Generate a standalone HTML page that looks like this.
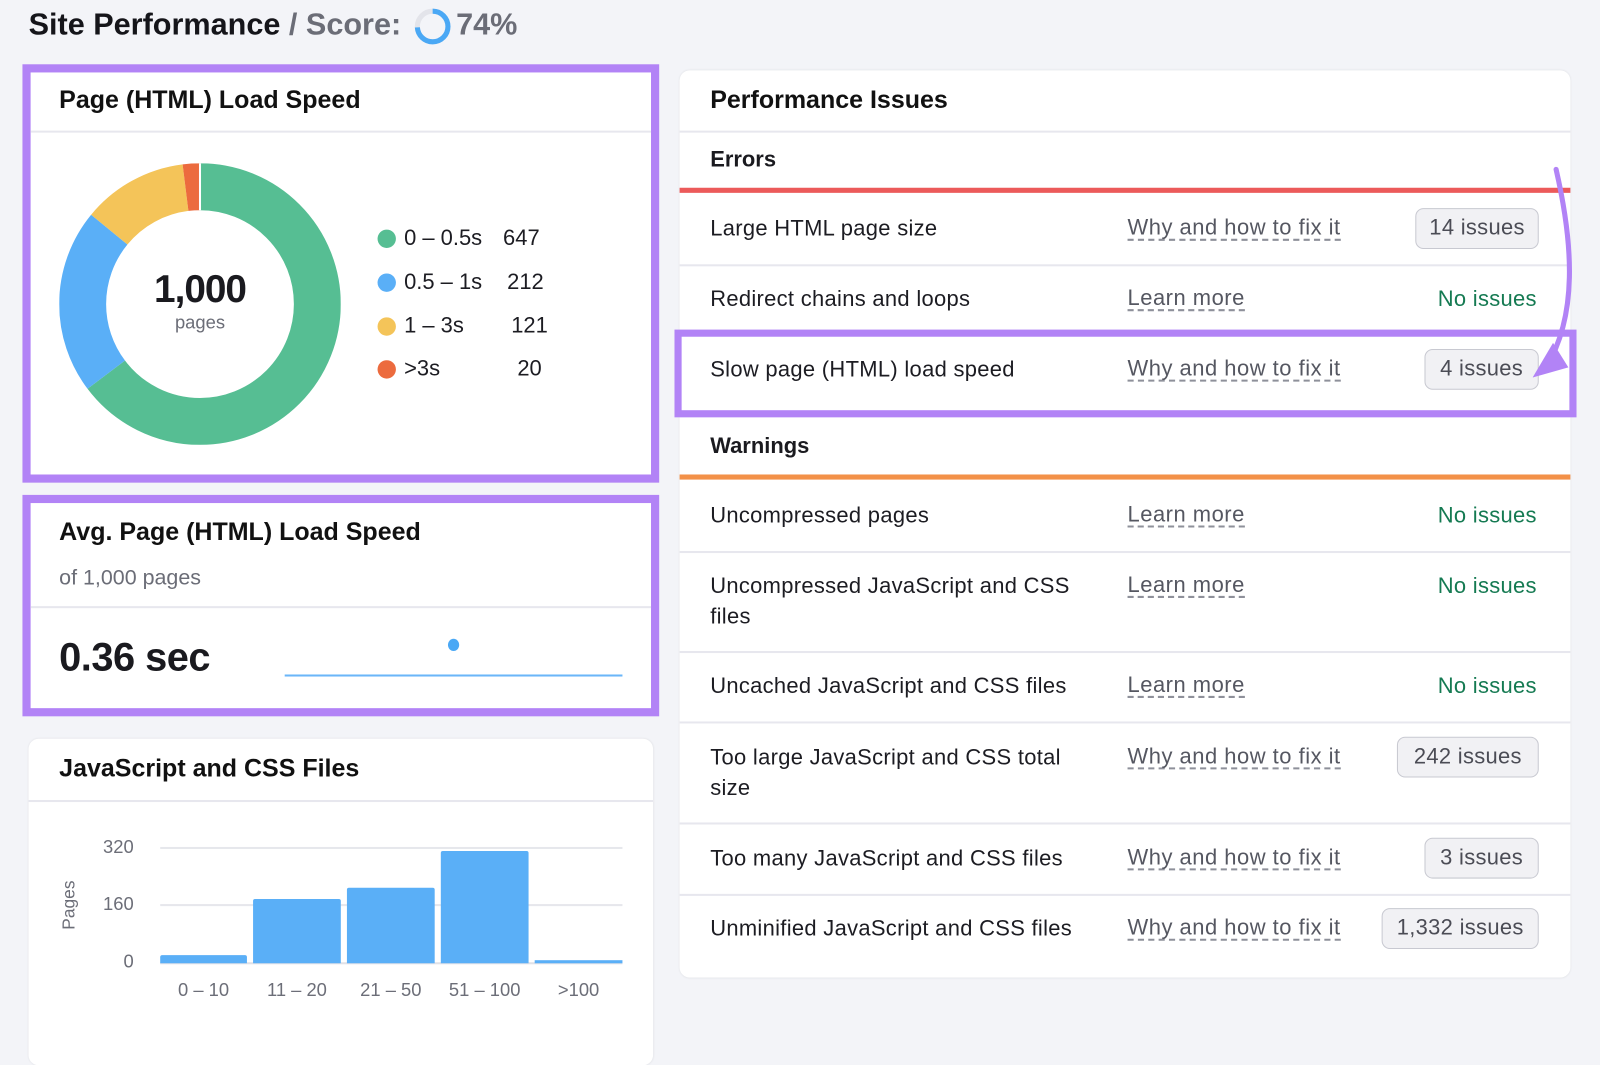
<!DOCTYPE html>
<html><head><meta charset="utf-8"><style>
*{margin:0;padding:0;box-sizing:border-box}
body{width:1600px;height:1017px;background:#f3f4f8;font-family:"Liberation Sans",Arial,sans-serif;position:relative;overflow:hidden;color:#1a1a1f}
#w{position:absolute;left:0;top:0;width:1568px;height:997px;transform:scale(1.0204);transform-origin:0 0}
.a{position:absolute;white-space:nowrap}
.card{position:absolute;background:#fff;border-radius:10px}
.pb{position:absolute;border:8px solid #b283f6}
.h{font-weight:bold;font-size:24.5px;color:#111}
.div{position:absolute;height:2px;background:#e7e7ee}
.t{font-size:21.5px;letter-spacing:0.3px;color:#1c1c22;line-height:24px}
.lk{font-size:21.5px;letter-spacing:0.5px;color:#555761;border-bottom:2px dashed #8e909a;line-height:22px}
.ok{font-size:21.5px;letter-spacing:0.3px;color:#157a52}
.bd{position:absolute;height:40px;border:1.5px solid #c8c9d1;background:#f1f1f4;border-radius:8px;font-size:21.5px;letter-spacing:0.3px;color:#4b4c55;line-height:37px;text-align:center}
.lg{font-size:21.5px;color:#1c1c22}
.dot{position:absolute;width:18px;height:18px;border-radius:50%}
.ax{font-size:18px;color:#6c6e78}
</style></head><body><div id="w">
<div class="a" style="left:28px;top:8px;font-size:30px;font-weight:bold;color:#15151a">Site Performance <span style="color:#6b6d77">/ Score:</span></div>
<svg class="a" style="left:405px;top:7px" width="38" height="38"><circle cx="19" cy="19" r="15" fill="none" stroke="#e3e4ea" stroke-width="5"/><circle cx="19" cy="19" r="15" fill="none" stroke="#4aa8f5" stroke-width="5" stroke-dasharray="69.7 94.2" transform="rotate(-90 19 19)"/></svg>
<div class="a" style="left:447px;top:8px;font-size:30px;font-weight:bold;color:#6b6d77">74%</div>

<div class="card" style="left:28px;top:69px;width:612px;height:398px;border-radius:0"></div>
<div class="pb" style="left:22px;top:63px;width:624px;height:410px"></div>
<div class="a h" style="left:58px;top:85px">Page (HTML) Load Speed</div>
<div class="div" style="left:30px;top:128px;width:608px"></div>
<svg class="a" style="left:58px;top:160px" width="276" height="276" viewBox="0 0 276 276">
<g transform="rotate(-90 138 138)" fill="none" stroke-width="46">
<circle cx="138" cy="138" r="115" stroke="#56be93" stroke-dasharray="467.5 1000" stroke-dashoffset="0"/>
<circle cx="138" cy="138" r="115" stroke="#5aaff7" stroke-dasharray="153.2 1000" stroke-dashoffset="-467.5"/>
<circle cx="138" cy="138" r="115" stroke="#f4c459" stroke-dasharray="87.3 1000" stroke-dashoffset="-620.7"/>
<circle cx="138" cy="138" r="115" stroke="#ec6b3e" stroke-dasharray="14.6 1000" stroke-dashoffset="-708"/>
</g>
<line x1="138" y1="0" x2="138" y2="46" stroke="#fff" stroke-width="2"/>
</svg>
<div class="a" style="left:136px;top:263px;width:120px;text-align:center;font-size:38px;font-weight:bold;letter-spacing:-1px">1,000</div>
<div class="a" style="left:146px;top:306px;width:100px;text-align:center;font-size:18px;color:#6b6d77">pages</div>
<div class="dot" style="left:370px;top:225px;background:#56be93"></div><div class="a lg" style="left:396px;top:221px">0 – 0.5s</div><div class="a lg" style="left:493px;top:221px">647</div>
<div class="dot" style="left:370px;top:268px;background:#5aaff7"></div><div class="a lg" style="left:396px;top:264px">0.5 – 1s</div><div class="a lg" style="left:497px;top:264px">212</div>
<div class="dot" style="left:370px;top:311px;background:#f4c459"></div><div class="a lg" style="left:396px;top:307px">1 – 3s</div><div class="a lg" style="left:501px;top:307px">121</div>
<div class="dot" style="left:370px;top:353px;background:#ec6b3e"></div><div class="a lg" style="left:396px;top:349px">&gt;3s</div><div class="a lg" style="left:507px;top:349px">20</div>

<div class="card" style="left:28px;top:491px;width:612px;height:205px;border-radius:0"></div>
<div class="pb" style="left:22px;top:485px;width:624px;height:217px"></div>
<div class="a h" style="left:58px;top:508px">Avg. Page (HTML) Load Speed</div>
<div class="a" style="left:58px;top:555px;font-size:21px;color:#6b6d77">of 1,000 pages</div>
<div class="div" style="left:30px;top:594px;width:608px"></div>
<div class="a" style="left:58px;top:623px;font-size:39px;font-weight:bold;letter-spacing:-0.5px">0.36 sec</div>
<div class="a" style="left:279px;top:661px;width:331px;height:2px;background:#6bb6f8"></div>
<div class="dot" style="left:439px;top:626px;width:11px;height:12px;background:#4aa8f5"></div>

<div class="card" style="left:28px;top:724px;width:612px;height:320px;box-shadow:0 0 2px rgba(0,0,0,.08)"></div>
<div class="a h" style="left:58px;top:740px">JavaScript and CSS Files</div>
<div class="div" style="left:28px;top:784px;width:612px"></div>
<div class="a" style="left:157px;top:830px;width:453px;height:2px;background:#e6e7ec"></div>
<div class="a" style="left:157px;top:886px;width:453px;height:2px;background:#e6e7ec"></div>
<div class="a" style="left:157px;top:943px;width:453px;height:2px;background:#e0e1e7"></div>
<div class="a ax" style="left:90px;top:820px;width:41px;text-align:right">320</div>
<div class="a ax" style="left:90px;top:876px;width:41px;text-align:right">160</div>
<div class="a ax" style="left:90px;top:932px;width:41px;text-align:right">0</div>
<div class="a ax" style="left:44px;top:877px;transform:rotate(-90deg);font-size:17px">Pages</div>
<div class="a" style="left:157px;top:936px;width:85px;height:8px;background:#5aaff7;border-radius:2px 2px 0 0"></div>
<div class="a" style="left:248px;top:881px;width:86px;height:63px;background:#5aaff7;border-radius:2px 2px 0 0"></div>
<div class="a" style="left:340px;top:870px;width:86px;height:74px;background:#5aaff7;border-radius:2px 2px 0 0"></div>
<div class="a" style="left:432px;top:834px;width:86px;height:110px;background:#5aaff7;border-radius:2px 2px 0 0"></div>
<div class="a" style="left:524px;top:941px;width:86px;height:3px;background:#5aaff7"></div>
<div class="a ax" style="left:147px;top:960px;width:105px;text-align:center">0 – 10</div>
<div class="a ax" style="left:238px;top:960px;width:106px;text-align:center">11 – 20</div>
<div class="a ax" style="left:330px;top:960px;width:106px;text-align:center">21 – 50</div>
<div class="a ax" style="left:422px;top:960px;width:106px;text-align:center">51 – 100</div>
<div class="a ax" style="left:514px;top:960px;width:106px;text-align:center">&gt;100</div>

<div class="card" style="left:666px;top:69px;width:873px;height:889px;box-shadow:0 0 2px rgba(0,0,0,.08)"></div>
<div class="a h" style="left:696px;top:85px">Performance Issues</div>
<div class="div" style="left:666px;top:128px;width:873px"></div>
<div class="a" style="left:696px;top:144px;font-size:21.5px;font-weight:bold">Errors</div>
<div class="a" style="left:666px;top:184px;width:873px;height:5px;background:#ec5a5a"></div>

<div class="a t" style="left:696px;top:212px">Large HTML page size</div>
<div class="a lk" style="left:1105px;top:212px">Why and how to fix it</div>
<div class="bd" style="left:1387px;top:204px;width:121px">14 issues</div>
<div class="div" style="left:666px;top:259px;width:873px"></div>

<div class="a t" style="left:696px;top:281px">Redirect chains and loops</div>
<div class="a lk" style="left:1105px;top:281px">Learn more</div>
<div class="a ok" style="left:1409px;top:281px">No issues</div>

<div class="a t" style="left:696px;top:350px">Slow page (HTML) load speed</div>
<div class="a lk" style="left:1105px;top:350px">Why and how to fix it</div>
<div class="bd" style="left:1396px;top:342px;width:112px">4 issues</div>

<div class="a" style="left:696px;top:425px;font-size:21.5px;font-weight:bold">Warnings</div>
<div class="a" style="left:666px;top:465px;width:873px;height:5px;background:#f39148"></div>

<div class="a t" style="left:696px;top:493px">Uncompressed pages</div>
<div class="a lk" style="left:1105px;top:493px">Learn more</div>
<div class="a ok" style="left:1409px;top:493px">No issues</div>
<div class="div" style="left:666px;top:540px;width:873px"></div>

<div class="a t" style="left:696px;top:559px;line-height:30px">Uncompressed JavaScript and CSS<br>files</div>
<div class="a lk" style="left:1105px;top:562px">Learn more</div>
<div class="a ok" style="left:1409px;top:562px">No issues</div>
<div class="div" style="left:666px;top:638px;width:873px"></div>

<div class="a t" style="left:696px;top:660px">Uncached JavaScript and CSS files</div>
<div class="a lk" style="left:1105px;top:660px">Learn more</div>
<div class="a ok" style="left:1409px;top:660px">No issues</div>
<div class="div" style="left:666px;top:707px;width:873px"></div>

<div class="a t" style="left:696px;top:727px;line-height:30px">Too large JavaScript and CSS total<br>size</div>
<div class="a lk" style="left:1105px;top:730px">Why and how to fix it</div>
<div class="bd" style="left:1369px;top:722px;width:139px">242 issues</div>
<div class="div" style="left:666px;top:806px;width:873px"></div>

<div class="a t" style="left:696px;top:829px">Too many JavaScript and CSS files</div>
<div class="a lk" style="left:1105px;top:829px">Why and how to fix it</div>
<div class="bd" style="left:1396px;top:821px;width:112px">3 issues</div>
<div class="div" style="left:666px;top:876px;width:873px"></div>

<div class="a t" style="left:696px;top:898px">Unminified JavaScript and CSS files</div>
<div class="a lk" style="left:1105px;top:898px">Why and how to fix it</div>
<div class="bd" style="left:1354px;top:890px;width:154px">1,332 issues</div>

<div class="pb" style="left:661px;top:323px;width:884px;height:86px;border-width:7px"></div>
<svg class="a" style="left:1480px;top:160px" width="80" height="230">
<path d="M45 6 C62 80 66 150 35 200" fill="none" stroke="#b283f6" stroke-width="5" stroke-linecap="round"/>
<path d="M22 210 L57 200 L42 176 Z" fill="#b283f6"/>
</svg>
</div></body></html>
